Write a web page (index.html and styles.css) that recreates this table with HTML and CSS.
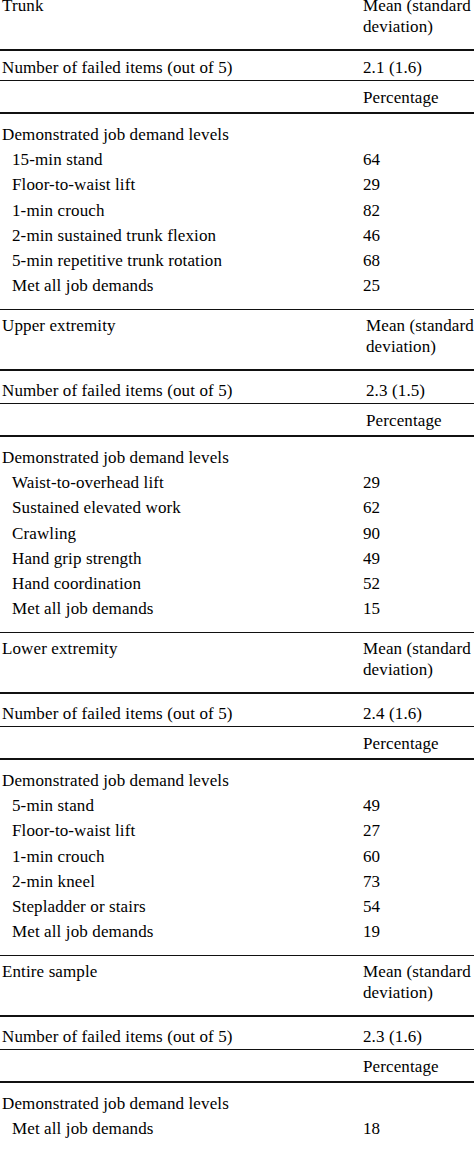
FILE: index.html
```html
<!DOCTYPE html>
<html>
<head>
<meta charset="utf-8">
<link rel="stylesheet" href="styles.css">
</head>
<body>
<div class="table">
  <section class="sec first">
    <div class="row head"><div class="c1">Trunk</div><div class="c2">Mean (standard<br>deviation)</div></div>
    <div class="row num"><div class="c1">Number of failed items (out of 5)</div><div class="c2">2.1 (1.6)</div></div>
    <div class="row pct"><div class="c1"></div><div class="c2">Percentage</div></div>
    <div class="block">
      <div class="row item"><div class="c1">Demonstrated job demand levels</div><div class="c2"></div></div>
      <div class="row item"><div class="c1 sub">15-min stand</div><div class="c2">64</div></div>
      <div class="row item"><div class="c1 sub">Floor-to-waist lift</div><div class="c2">29</div></div>
      <div class="row item"><div class="c1 sub">1-min crouch</div><div class="c2">82</div></div>
      <div class="row item"><div class="c1 sub">2-min sustained trunk flexion</div><div class="c2">46</div></div>
      <div class="row item"><div class="c1 sub">5-min repetitive trunk rotation</div><div class="c2">68</div></div>
      <div class="row item"><div class="c1 sub">Met all job demands</div><div class="c2">25</div></div>
    </div>
  </section>
  <section class="sec">
    <div class="row head"><div class="c1">Upper extremity</div><div class="c2 shift">Mean (standard<br>deviation)</div></div>
    <div class="row num"><div class="c1">Number of failed items (out of 5)</div><div class="c2 shift">2.3 (1.5)</div></div>
    <div class="row pct"><div class="c1"></div><div class="c2 shift">Percentage</div></div>
    <div class="block">
      <div class="row item"><div class="c1">Demonstrated job demand levels</div><div class="c2"></div></div>
      <div class="row item"><div class="c1 sub">Waist-to-overhead lift</div><div class="c2">29</div></div>
      <div class="row item"><div class="c1 sub">Sustained elevated work</div><div class="c2">62</div></div>
      <div class="row item"><div class="c1 sub">Crawling</div><div class="c2">90</div></div>
      <div class="row item"><div class="c1 sub">Hand grip strength</div><div class="c2">49</div></div>
      <div class="row item"><div class="c1 sub">Hand coordination</div><div class="c2">52</div></div>
      <div class="row item"><div class="c1 sub">Met all job demands</div><div class="c2">15</div></div>
    </div>
  </section>
  <section class="sec">
    <div class="row head"><div class="c1">Lower extremity</div><div class="c2">Mean (standard<br>deviation)</div></div>
    <div class="row num"><div class="c1">Number of failed items (out of 5)</div><div class="c2">2.4 (1.6)</div></div>
    <div class="row pct"><div class="c1"></div><div class="c2">Percentage</div></div>
    <div class="block">
      <div class="row item"><div class="c1">Demonstrated job demand levels</div><div class="c2"></div></div>
      <div class="row item"><div class="c1 sub">5-min stand</div><div class="c2">49</div></div>
      <div class="row item"><div class="c1 sub">Floor-to-waist lift</div><div class="c2">27</div></div>
      <div class="row item"><div class="c1 sub">1-min crouch</div><div class="c2">60</div></div>
      <div class="row item"><div class="c1 sub">2-min kneel</div><div class="c2">73</div></div>
      <div class="row item"><div class="c1 sub">Stepladder or stairs</div><div class="c2">54</div></div>
      <div class="row item"><div class="c1 sub">Met all job demands</div><div class="c2">19</div></div>
    </div>
  </section>
  <section class="sec last">
    <div class="row head"><div class="c1">Entire sample</div><div class="c2">Mean (standard<br>deviation)</div></div>
    <div class="row num"><div class="c1">Number of failed items (out of 5)</div><div class="c2">2.3 (1.6)</div></div>
    <div class="row pct"><div class="c1"></div><div class="c2">Percentage</div></div>
    <div class="block">
      <div class="row item"><div class="c1">Demonstrated job demand levels</div><div class="c2"></div></div>
      <div class="row item"><div class="c1 sub">Met all job demands</div><div class="c2">18</div></div>
    </div>
  </section>
</div>
</body>
</html>
```
FILE: styles.css
```css
html, body {
  margin: 0;
  padding: 0;
  background: #fff;
  overflow: hidden;
}
body {
  width: 474px;
  height: 1151px;
  font-family: "Liberation Serif", "Times New Roman", serif;
  font-size: 17px;
  letter-spacing: 0.12px;
  color: #000;
}
.table {
  display: flex;
  flex-direction: column;
  margin-top: -14px;
  width: 474px;
  overflow: hidden;
}
.sec {
  display: flex;
  flex-direction: column;
  border-top: 1.5px solid #111;
}
.sec.first {
  border-top-color: transparent;
}
.row {
  display: grid;
  grid-template-columns: 363px 140px;
  white-space: nowrap;
  box-sizing: border-box;
}
.c1 {
  padding-left: 2px;
}
.c2.shift {
  padding-left: 3px;
}
.sub {
  padding-left: 12px;
}
.head {
  height: 61px;
  padding-top: 5px;
  line-height: 21px;
  border-bottom: 2.5px solid #111;
}
.first .head {
  height: 64px;
  padding-top: 8px;
}
.num {
  height: 33px;
  line-height: 21px;
  padding-top: 9px;
  border-bottom: 1.5px solid #111;
}
.first .num {
  height: 30px;
  padding-top: 6px;
}
.pct {
  height: 33px;
  line-height: 21px;
  padding-top: 6px;
  border-bottom: 2.5px solid #111;
}
.block {
  height: 195px;
  padding-top: 8px;
  box-sizing: border-box;
}
.last .block {
  height: 71px;
  border-bottom: 2.5px solid #8c8c8c;
}
.item {
  height: 25.2px;
  line-height: 25.2px;
}
```
